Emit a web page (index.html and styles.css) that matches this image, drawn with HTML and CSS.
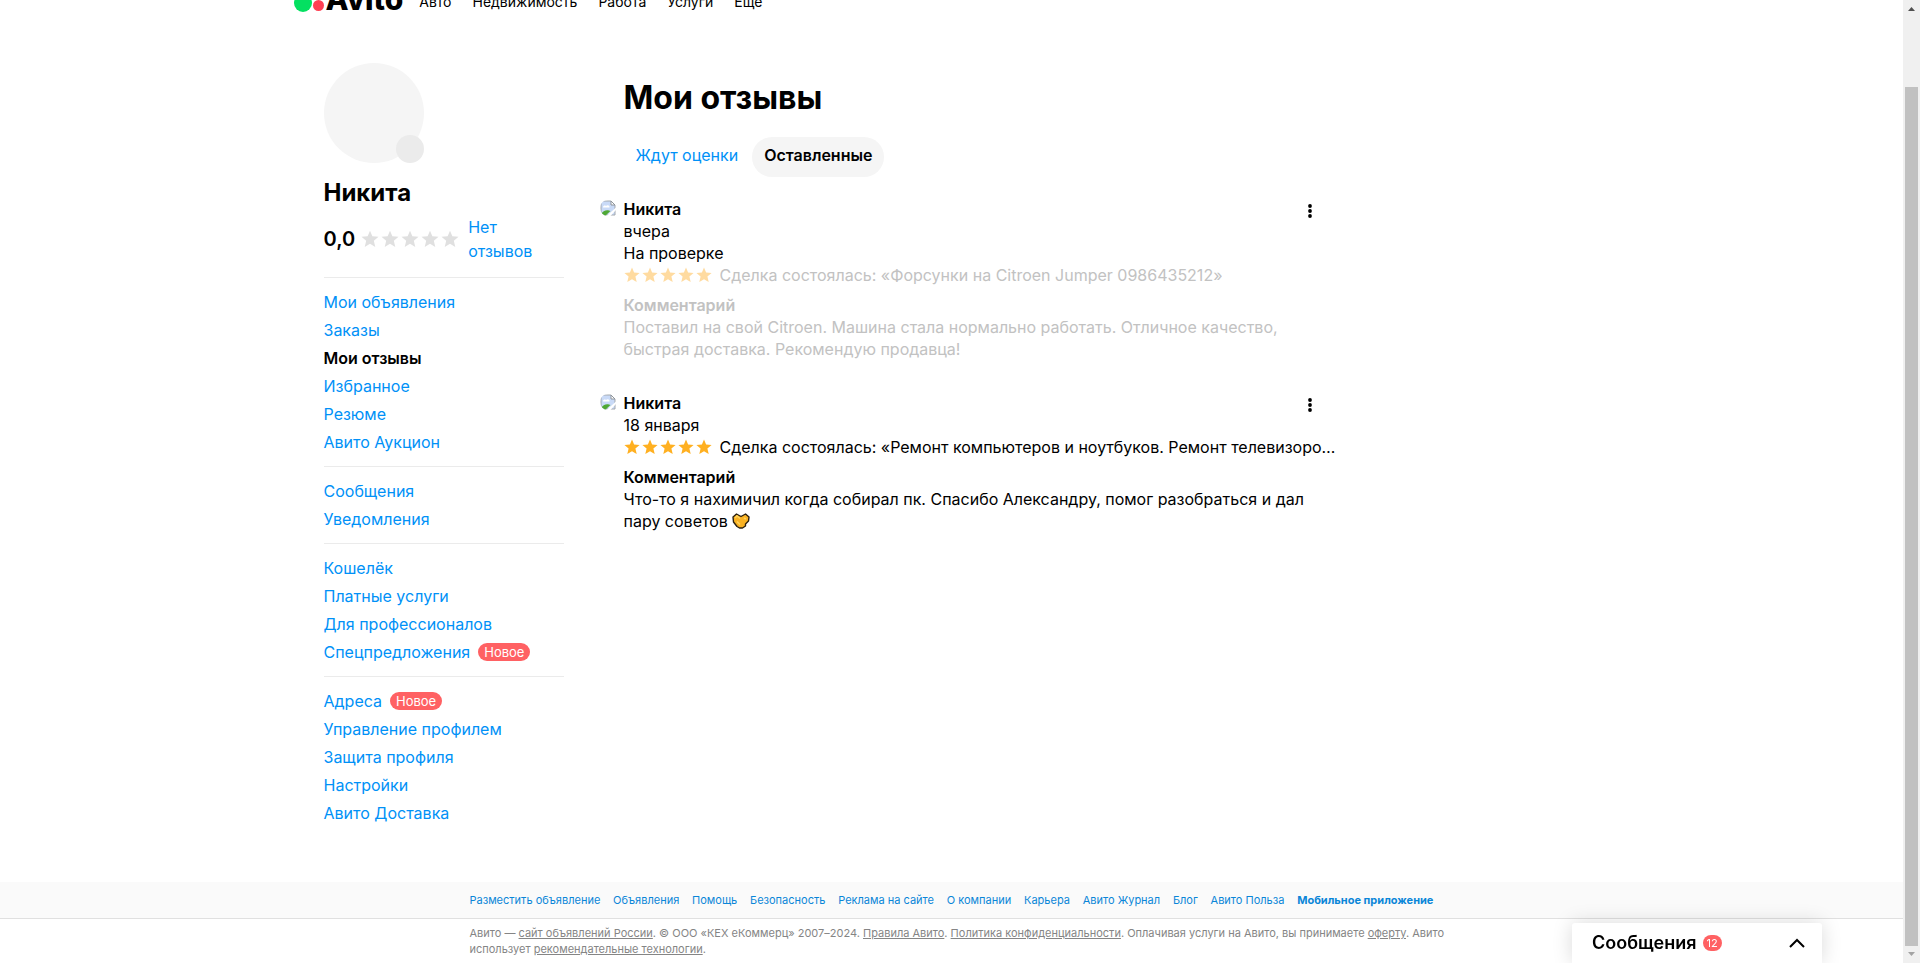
FILE: index.html
```html
<!DOCTYPE html>
<html lang="ru">
<head>
<meta charset="utf-8">
<title>Мои отзывы</title>
<link rel="stylesheet" href="styles.css">
</head>
<body>
<svg class="sprite" aria-hidden="true">
  <symbol id="star" viewBox="0 0 16 16"><path d="M8 .6l2.100 5 5.500.5-4.200 3.500 1.300 5.400L8 12.200 3.300 15l1.300-5.400L.4 6.100l5.500-.5z"/></symbol>
  <symbol id="broken" viewBox="0 0 16 16">
    <path d="M1 1h10l4 4v10H1z" fill="#c9daf7"/>
    <path d="M1 1h10l4 4v10H1z" fill="none" stroke="#a3a8ad"/>
    <path d="M11 1v4h4z" fill="#fff" stroke="#8f959b"/>
    <path d="M3 7.500c0-2 2-2.500 3-1.500 1-1.500 4-1 3.500 1.500z" fill="#fff"/>
    <path d="M1 16v-2c2-3 5-4.500 8-3.500l1.500.5L5 16z" fill="#4fa834"/>
    <path d="M6 16.500L16 7.500v2.500l-6 6.500z" fill="#fff"/>
  </symbol>
  <symbol id="dots" viewBox="0 0 4 14"><circle cx="2" cy="2" r="1.900"/><circle cx="2" cy="7" r="1.900"/><circle cx="2" cy="12" r="1.900"/></symbol>
</svg>
<div class="page">
  <header class="header">
    <div class="header-inner">
      <a class="logo" href="#" aria-label="Avito">
        <svg class="logo-mark" viewBox="0 0 32 32" aria-hidden="true"><circle cx="9" cy="23" r="9" fill="#04e061"/><circle cx="24.500" cy="25.500" r="5.500" fill="#ff4053"/><circle cx="24" cy="11" r="8" fill="#0af"/><circle cx="8" cy="8" r="4" fill="#965eeb"/></svg>
        <span class="logo-text">Avito</span>
      </a>
      <nav class="top-nav">
        <a href="#">Авто</a><a href="#">Недвижимость</a><a href="#">Работа</a><a href="#">Услуги</a><a href="#">Ещё</a>
      </nav>
    </div>
  </header>

  <div class="columns">
    <aside class="sidebar">
      <div class="avatar"><span class="avatar-edit"></span></div>
      <h2 class="user-name">Никита</h2>
      <div class="rating">
        <span class="rating-value">0,0</span>
        <span class="stars stars-empty"><svg><use href="#star"/></svg><svg><use href="#star"/></svg><svg><use href="#star"/></svg><svg><use href="#star"/></svg><svg><use href="#star"/></svg></span>
        <a class="rating-link" href="#">Нет отзывов</a>
      </div>
      <nav class="menu">
        <ul class="menu-group">
          <li><a href="#">Мои объявления</a></li>
          <li><a href="#">Заказы</a></li>
          <li><a class="current" href="#" aria-current="page">Мои отзывы</a></li>
          <li><a href="#">Избранное</a></li>
          <li><a href="#">Резюме</a></li>
          <li><a href="#">Авито Аукцион</a></li>
        </ul>
        <ul class="menu-group">
          <li><a href="#">Сообщения</a></li>
          <li><a href="#">Уведомления</a></li>
        </ul>
        <ul class="menu-group">
          <li><a href="#">Кошелёк</a></li>
          <li><a href="#">Платные услуги</a></li>
          <li><a href="#">Для профессионалов</a></li>
          <li><a href="#">Спецпредложения</a><span class="tag">Новое</span></li>
        </ul>
        <ul class="menu-group">
          <li><a href="#">Адреса</a><span class="tag">Новое</span></li>
          <li><a href="#">Управление профилем</a></li>
          <li><a href="#">Защита профиля</a></li>
          <li><a href="#">Настройки</a></li>
          <li><a href="#">Авито Доставка</a></li>
        </ul>
      </nav>
    </aside>

    <main class="content">
      <h1 class="title">Мои отзывы</h1>
      <div class="tabs">
        <button class="tab" type="button">Ждут оценки</button>
        <button class="tab tab-active" type="button">Оставленные</button>
      </div>

      <article class="review">
        <svg class="review-avatar" aria-hidden="true"><use href="#broken"/></svg>
        <div class="review-body">
          <div class="review-head">
            <h3 class="strong">Никита</h3>
            <button class="more" type="button" aria-label="Ещё"><svg><use href="#dots"/></svg></button>
          </div>
          <p>вчера</p>
          <p>На проверке</p>
          <div class="faded">
            <div class="deal">
              <span class="stars"><svg><use href="#star"/></svg><svg><use href="#star"/></svg><svg><use href="#star"/></svg><svg><use href="#star"/></svg><svg><use href="#star"/></svg></span>
              <span class="deal-text">Сделка состоялась: «Форсунки на Citroen Jumper 0986435212»</span>
            </div>
            <h4 class="strong">Комментарий</h4>
            <p>Поставил на свой Citroen. Машина стала нормально работать. Отличное качество,<br>быстрая доставка. Рекомендую продавца!</p>
          </div>
        </div>
      </article>

      <article class="review">
        <svg class="review-avatar" aria-hidden="true"><use href="#broken"/></svg>
        <div class="review-body">
          <div class="review-head">
            <h3 class="strong">Никита</h3>
            <button class="more" type="button" aria-label="Ещё"><svg><use href="#dots"/></svg></button>
          </div>
          <p>18 января</p>
          <div class="deal">
            <span class="stars"><svg><use href="#star"/></svg><svg><use href="#star"/></svg><svg><use href="#star"/></svg><svg><use href="#star"/></svg><svg><use href="#star"/></svg></span>
            <span class="deal-text">Сделка состоялась: «Ремонт компьютеров и ноутбуков. Ремонт телевизоров»</span>
          </div>
          <h4 class="strong">Комментарий</h4>
          <p>Что-то я нахимичил когда собирал пк. Спасибо Александру, помог разобраться и дал<br>пару советов <svg class="hands" viewBox="0 0 18 16" aria-hidden="true"><path d="M1 4l3.500-3L9 3.500 13.500 1l3.500 3-.5 4-3 3v2l-3 2H7.500L5 13.500 1.500 9z" fill="#f9b223" stroke="#2b2110" stroke-width="1.400" stroke-linejoin="round"/><path d="M3 5l2-2 3 2.500M5 8.500l3 3M12 5l2 1" fill="none" stroke="#ffd45c" stroke-width="1.500"/></svg></p>
        </div>
      </article>
    </main>
  </div>

  <footer class="footer">
    <div class="footer-band">
      <nav class="footer-links">
        <a href="#">Разместить объявление</a><a href="#">Объявления</a><a href="#">Помощь</a><a href="#">Безопасность</a><a href="#">Реклама на сайте</a><a href="#">О компании</a><a href="#">Карьера</a><a href="#">Авито Журнал</a><a href="#">Блог</a><a href="#">Авито Польза</a><a class="app-link" href="#">Мобильное приложение</a>
      </nav>
    </div>
    <p class="legal">Авито — <a href="#">сайт объявлений России</a>. © ООО «КЕХ еКоммерц» 2007–2024. <a href="#">Правила Авито</a>. <a href="#">Политика конфиденциальности</a>. Оплачивая услуги на Авито, вы принимаете <a href="#">оферту</a>. Авито<br>использует <a href="#">рекомендательные технологии</a>.</p>
  </footer>
</div>

<div class="scrollbar" aria-hidden="true">
  <svg class="arrow arrow-up" viewBox="0 0 7 4"><path d="M0 4L3.500 0 7 4z"/></svg>
  <div class="thumb"></div>
  <svg class="arrow arrow-down" viewBox="0 0 7 4"><path d="M0 0l3.500 4L7 0z"/></svg>
</div>

<button class="messenger" type="button">
  <span class="messenger-title">Сообщения</span>
  <span class="count">12</span>
  <svg class="chevron" viewBox="0 0 16 10" aria-hidden="true"><path d="M1 9l7-7 7 7" fill="none" stroke="#000" stroke-width="2"/></svg>
</button>
</body>
</html>
```
FILE: styles.css
```css
* { box-sizing: border-box; }
body {
  margin: 0;
  display: grid;
  grid-template-columns: minmax(0, 1fr) 17px;
  min-height: 100vh;
  background: #fff;
  color: #000;
  font: 16px/22px Inter, "Open Sans", sans-serif;
}
h1, h2, h3, h4, p, ul { margin: 0; padding: 0; }
ul { list-style: none; }
a { color: #0091f7; text-decoration: none; }
button { border: 0; background: none; padding: 0; font: inherit; color: inherit; }
.sprite { position: absolute; width: 0; height: 0; }
.page { display: flex; flex-direction: column; min-height: 100vh; }

.header { height: 15px; overflow: hidden; display: flex; align-items: flex-end; }
.header-inner { width: 100%; max-width: 1316px; margin: 0 auto; display: flex; align-items: flex-end; gap: 16px; }
.logo { display: flex; align-items: flex-end; color: #000; }
.logo-mark { width: 32px; height: 32px; margin-bottom: 3px; }
.logo-text { font-size: 30px; font-weight: 800; line-height: 40px; margin-bottom: -4px; }
.top-nav { display: flex; gap: 21px; font-size: 14px; line-height: 24px; padding-bottom: 1px; }
.top-nav a { color: #000; }

.columns { width: 100%; max-width: 1316px; margin: 0 auto; padding: 48px 30px 40px; display: flex; gap: 36px; flex: 1; }
.sidebar { flex: 0 0 240px; }
.avatar { position: relative; width: 100px; height: 100px; border-radius: 50%; background: #f5f5f5; }
.avatar-edit { position: absolute; right: 0; bottom: 0; width: 28px; height: 28px; border-radius: 50%; background: #ebebeb; }
.user-name { margin-top: 14px; font-size: 24px; line-height: 32px; font-weight: 700; }
.rating { display: flex; align-items: center; margin-top: 6px; line-height: 24px; }
.rating-value { font-size: 20px; font-weight: 600; margin-right: 6px; }
.rating-link { width: 90px; margin-left: 9px; }
.stars { display: flex; gap: 2px; flex: none; fill: #ffb021; }
.stars svg { width: 16px; height: 16px; }
.stars-empty { fill: #e0e0e0; }
.stars-empty svg { width: 18px; height: 18px; }
.menu { margin-top: 14px; }
.menu-group { padding: 10px 0; border-top: 1px solid #ebebeb; line-height: 28px; }
.menu-group li { display: flex; align-items: center; gap: 8px; }
.current { color: #000; font-weight: 600; }
.tag { padding: 0 6px; border-radius: 9px; background: #ff6163; color: #fff; font-size: 13px; line-height: 18px; }

.content { flex: 0 1 740px; min-width: 0; padding-top: 15px; }
.title { margin-left: 24px; font-size: 32px; line-height: 40px; font-weight: 700; }
.tabs { display: flex; gap: 2px; margin: 19px 0 21px 24px; }
.tab { height: 40px; padding: 0 12px 4px; border-radius: 20px; color: #0091f7; }
.tab-active { background: #f5f5f5; color: #000; font-weight: 600; }
.review { display: flex; gap: 8px; margin-bottom: 32px; }
.review-avatar { flex: none; width: 16px; height: 16px; margin-top: 2px; border-radius: 8px 4px 0 8px; }
.review-body { flex: 1; min-width: 0; }
.review-head { display: flex; justify-content: space-between; }
.strong { font-size: 16px; line-height: 22px; font-weight: 600; }
.more { width: 20px; height: 22px; margin-right: 20px; padding-top: 4px; display: flex; align-items: center; justify-content: center; }
.more svg { width: 4px; height: 14px; }
.faded { color: #c2c2c2; }
.faded .stars { fill: #ffdba0; }
.deal { display: flex; align-items: center; gap: 8px; margin-bottom: 8px; }
.deal-text { min-width: 0; overflow: hidden; text-overflow: ellipsis; white-space: nowrap; }
.hands { width: 18px; height: 16px; vertical-align: -2px; }

.footer { font-size: 11px; line-height: 16px; }
.footer-band { background: #fafafa; border-bottom: 1px solid #e0e0e0; padding: 10px 0; }
.footer-links { max-width: 964px; margin: 0 auto; display: flex; justify-content: space-between; white-space: nowrap; }
.footer-links a { color: #0a86d8; }
.footer-links .app-link { font-weight: 700; }
.legal { max-width: 964px; margin: 0 auto; padding: 6px 0; color: #858585; white-space: nowrap; }
.legal a { color: inherit; text-decoration: underline; }

.scrollbar { display: flex; flex-direction: column; align-items: center; justify-content: space-between; height: 100vh; background: #f0f0f0; padding: 7px 2px; }
.arrow { width: 7px; height: 4px; fill: #505050; }
.arrow-down { fill: #a3a3a3; }
.thumb { align-self: stretch; flex: 1; margin: 76px 0 6px; background: #c1c1c1; }

.messenger { position: fixed; right: 98px; bottom: 0; width: 250px; height: 40px; padding: 0 17px 0 20px; display: flex; align-items: center; gap: 6px; background: #fff; border-radius: 3px 3px 0 0; box-shadow: 0 0 20px rgba(0, 0, 0, .15); }
.messenger-title { font-size: 18px; font-weight: 600; }
.count { min-width: 19px; border-radius: 8px; background: #ff6163; color: #fff; font-size: 11px; line-height: 16px; text-align: center; }
.chevron { width: 16px; height: 10px; margin-left: auto; }
```
